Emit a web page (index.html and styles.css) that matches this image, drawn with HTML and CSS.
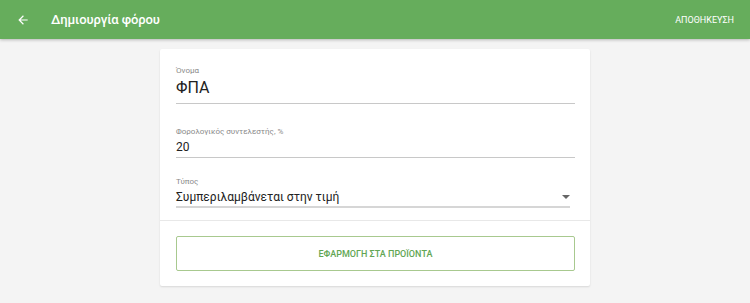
FILE: index.html
```html
<!DOCTYPE html>
<html lang="el">
<head>
<meta charset="utf-8">
<link rel="stylesheet" href="styles.css">
</head>
<body>
<header class="topbar">
  <div class="topbar-left">
    <svg class="back" width="14" height="14" viewBox="0 0 24 24"><path d="M20 11H7.83l5.59-5.59L12 4l-8 8 8 8 1.41-1.41L7.83 13H20v-2z" fill="#fff"/></svg>
    <h1 class="title">Δημιουργία φόρου</h1>
  </div>
  <button class="save">ΑΠΟΘΗΚΕΥΣΗ</button>
</header>
<main class="content">
  <section class="card">
    <div class="fields">
      <div class="field">
        <div class="label">Όνομα</div>
        <div class="value value-lg">ΦΠΑ</div>
      </div>
      <div class="field">
        <div class="label">Φορολογικός συντελεστής, %</div>
        <div class="value value-md">20</div>
      </div>
      <div class="field">
        <div class="label">Τύπος</div>
        <div class="value select">
          <span>Συμπεριλαμβάνεται στην τιμή</span>
          <span class="caret"></span>
        </div>
      </div>
    </div>
    <div class="actions">
      <button class="outline">ΕΦΑΡΜΟΓΗ ΣΤΑ ΠΡΟΪΟΝΤΑ</button>
    </div>
  </section>
</main>
</body>
</html>
```
FILE: styles.css
```css
* { box-sizing: border-box; }
html, body { margin: 0; padding: 0; }
body {
  background: #f4f4f4;
  font-family: Roboto, "Noto Sans", sans-serif;
  width: 750px;
  height: 303px;
  overflow: hidden;
}
.topbar {
  height: 39px;
  background: #66ad5c;
  display: flex;
  align-items: center;
  justify-content: space-between;
  padding: 0 16px 0 16px;
  box-shadow: 0 1px 3px rgba(0,0,0,0.25);
  position: relative;
}
.topbar-left { display: flex; align-items: center; }
.back { display: block; }
.title {
  margin: 0 0 0 21px;
  color: #fff;
  font-size: 13px;
  font-weight: 500;
  letter-spacing: -0.1px;
}
.save {
  background: none;
  border: 0;
  color: #fff;
  font-family: inherit;
  font-size: 9px;
  font-weight: 400;
  padding: 0;
}
.content {
  display: flex;
  justify-content: center;
  padding-top: 10px;
}
.card {
  width: 430px;
  background: #fff;
  border-radius: 2px;
  box-shadow: 0 1px 2px rgba(0,0,0,0.12);
}
.fields { padding: 15px 15px 0 16px; }
.label {
  font-size: 8px;
  color: #8a8a8a;
  line-height: 10px;
  height: 12px;
  padding-top: 2px;
}
.value {
  color: #222;
  font-size: 12px;
  border-bottom: 1px solid #c8c8c8;
}
.value-lg {
  font-size: 16px;
  height: 28px;
  line-height: 24px;
  margin-bottom: 21px;
}
.value-md {
  height: 21px;
  line-height: 20px;
  margin-bottom: 17px;
}
.select {
  display: flex;
  justify-content: space-between;
  align-items: center;
  margin-right: 5px;
  height: 21px;
  border-bottom: 2px solid #d6d6d6;
}
.caret {
  width: 0; height: 0;
  border-left: 4px solid transparent;
  border-right: 4px solid transparent;
  border-top: 4px solid #666;
}
.actions {
  margin-top: 12px;
  border-top: 1px solid #e8e8e8;
  padding: 15px 15px 15px 16px;
}
.outline {
  display: block;
  width: 100%;
  height: 35px;
  background: #fff;
  border: 1px solid #a8c98f;
  border-radius: 2px;
  color: #62a653;
  font-family: inherit;
  font-size: 9px;
  font-weight: 500;
}
```
